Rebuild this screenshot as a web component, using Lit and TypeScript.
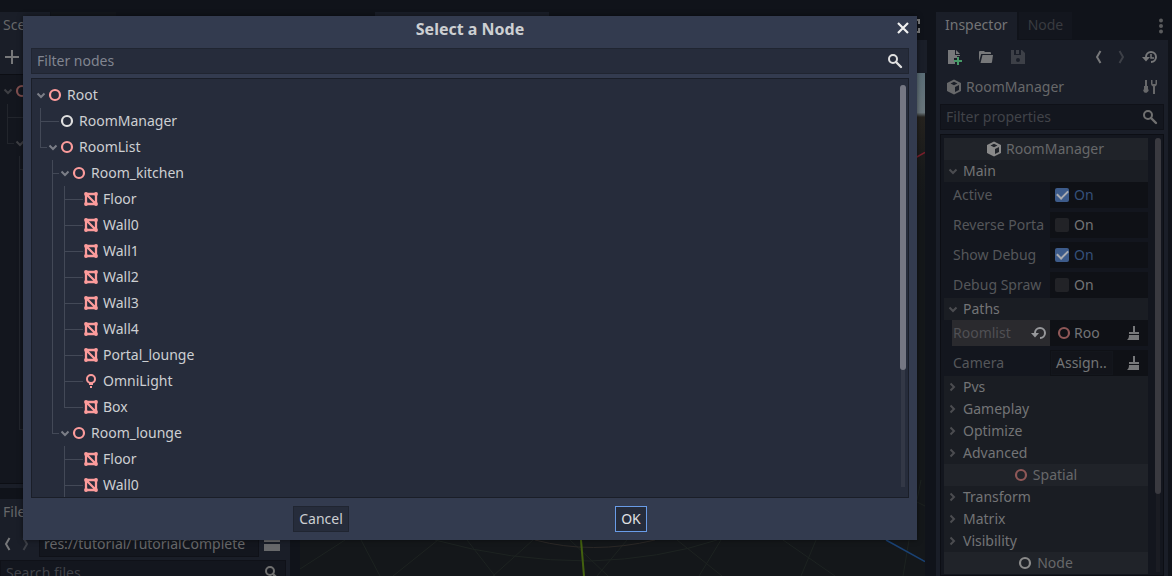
import { LitElement, html, svg, css, nothing } from "lit";
import { customElement, property } from "lit/decorators.js";

/* ---------- icons (16 x 16 grid) ---------- */
const shapes: Record<string, unknown> = {
  spatial: svg`<circle cx="8" cy="8" r="5" fill="none" stroke="currentColor" stroke-width="2.200"/>`,
  mesh: svg`<g fill="none" stroke="currentColor" stroke-width="2.300"><path d="M3 3h10v10H3zM3.500 3.500l9 9"/></g><g fill="currentColor"><circle cx="3" cy="3" r="1.900"/><circle cx="13" cy="3" r="1.900"/><circle cx="3" cy="13" r="1.900"/><circle cx="13" cy="13" r="1.900"/></g>`,
  light: svg`<path fill="currentColor" fill-rule="evenodd" d="M8 1a5 5 0 0 0-5 5 5 5 0 0 0 3 4.570V12h4v-1.430A5 5 0 0 0 13 6a5 5 0 0 0-5-5zm0 2a3 3 0 0 1 3 3 3 3 0 0 1-3 3 3 3 0 0 1-3-3 3 3 0 0 1 3-3zM7 13v2h2v-2z"/>`,
  down: svg`<path d="M4.500 6.500L8 10l3.500-3.500" fill="none" stroke="currentColor" stroke-width="2"/>`,
  right: svg`<path d="M5.500 4.500L9 8l-3.500 3.500" fill="none" stroke="currentColor" stroke-width="2"/>`,
  search: svg`<circle cx="6" cy="6" r="4" fill="none" stroke="currentColor" stroke-width="2"/><path d="M9 9l5 5" stroke="currentColor" stroke-width="2.400" stroke-linecap="round"/>`,
  close: svg`<path d="M3 3l10 10M13 3L3 13" stroke="currentColor" stroke-width="2.200"/>`,
  plus: svg`<path d="M7 1h2v6h6v2H9v6H7V9H1V7h6z" fill="currentColor"/>`,
  back: svg`<path d="M10.500 2L7 8l3.500 6" fill="none" stroke="currentColor" stroke-width="2"/>`,
  forward: svg`<path d="M5.500 2L9 8l-3.500 6" fill="none" stroke="currentColor" stroke-width="2"/>`,
  split: svg`<path d="M0 0h16v6H0zM0 8h16v7H0z" fill="currentColor"/>`,
  newfile: svg`<path fill="currentColor" d="M2 1v14h7v-2H8v-4h3V7h3V6H9V1zm8 0v4h4z"/><path fill="#479a67" d="M11 8h2v3h3v2h-3v3h-2v-3H8v-2h3z"/>`,
  folder: svg`<path fill="currentColor" d="M2 2a1 1 0 0 0-1 1v9.500L3.200 5H13V4a1 1 0 0 0-1-1H7L6 2zM4.500 6L2.500 14H13a1 1 0 0 0 1-.800L15 6z"/>`,
  save: svg`<path fill="currentColor" fill-rule="evenodd" d="M1 1v14h14V4l-3-3h-1v5H4V1zm5 0v4h3V1zm2 8a2 2 0 0 1 0 4 2 2 0 0 1 0-4z"/>`,
  history: svg`<path d="M4 9V8a5 5 0 1 1 5 5" fill="none" stroke="currentColor" stroke-width="2"/><path fill="currentColor" d="M0 8h8L4 12.500z"/><path d="M9 5v4h3" fill="none" stroke="currentColor" stroke-width="1.500"/>`,
  cube: svg`<path fill="currentColor" fill-rule="evenodd" d="M8 .500l7 3.500v8l-7 3.500L1 12V4zM8 2.800L4.500 4.500 8 6.300l3.500-1.800zM9 8v5l4-2V6z"/>`,
  tools: svg`<path fill="currentColor" d="M3 1v6H2v3a2 2 0 0 0 0 3 2.200 2.200 0 0 0 3.500 0 2 2 0 0 0 .500-3V7H5V1zM9 1v4a3 3 0 0 0 2 2.500V15h2V7.500A3 3 0 0 0 15 5V1h-1.500v4h-3V1z"/>`,
  dots: svg`<g fill="currentColor"><circle cx="8" cy="2.500" r="2"/><circle cx="8" cy="8" r="2"/><circle cx="8" cy="13.500" r="2"/></g>`,
  revert: svg`<path d="M4 9V8a5 5 0 1 1 5 5" fill="none" stroke="currentColor" stroke-width="2"/><path fill="currentColor" d="M0 8h8L4 12.500z"/>`,
  brush: svg`<path fill="currentColor" d="M7 1h2v6h4v2H3V7h4zM3 10h10v5H1c1.500-1 2-3 2-5z"/>`,
  expand: svg`<path fill="currentColor" d="M9 1h5v5h-2V3H9zM14 10v5H9v-2h3v-3zM2 1h5v2H4v3H2zM2 10h2v3h3v2H2z"/>`,
};

const icon = (name: string, cls = "") =>
  html`<svg class="icon ${cls}" width="16" height="16" viewBox="0 0 16 16" aria-hidden="true">${shapes[name]}</svg>`;

const shared = css`
  * { box-sizing: border-box; }
  button, input {
    font: inherit; color: inherit; margin: 0; padding: 0;
    border: 0; background: none; border-radius: 0; outline: 0;
  }
  .icon { display: block; flex: none; }
  .coral { color: #fc9c9c; }
  .light { color: #e0e0e0; }
  .field {
    display: flex; align-items: center; height: 26px; padding: 0 5px 1px;
    background: #262c3b; border: 1px solid #202531; color: #e0e0e0;
  }
  .field input { flex: 1; min-width: 0; height: 22px; }
  .field input::placeholder { color: #818590; opacity: 1; }
  .dim .coral { color: #7e4e4e; }
  .dim .light { color: #707070; }
  .dim .field { background: #13161e; border-color: #0f1118; color: #707070; }
  .dim .field input { color: #67686a; }
  .dim .field input::placeholder { color: #414349; }
`;

/* ---------- tree ---------- */
interface TreeNode {
  name: string;
  type: string;
  tone?: string;
  more?: boolean;
  children?: TreeNode[];
}

const mesh = (name: string, more = false): TreeNode => ({ name, type: "mesh", more });

const sceneRoot: TreeNode = {
  name: "Root", type: "spatial", children: [
    { name: "RoomManager", type: "spatial", tone: "light" },
    { name: "RoomList", type: "spatial", children: [
      { name: "Room_kitchen", type: "spatial", children: [
        mesh("Floor"), mesh("Wall0"), mesh("Wall1"), mesh("Wall2"), mesh("Wall3"), mesh("Wall4"),
        mesh("Portal_lounge"), { name: "OmniLight", type: "light" }, mesh("Box"),
      ] },
      { name: "Room_lounge", type: "spatial", children: [mesh("Floor"), mesh("Wall0", true)] },
    ] },
  ],
};

@customElement("node-tree")
class NodeTree extends LitElement {
  @property({ type: Boolean }) dim = false;

  static styles = [shared, css`
    :host { display: block; overflow: hidden; }
    .row { display: flex; align-items: center; height: 26px; line-height: 26px; white-space: nowrap; }
    .guide { flex: none; display: block; overflow: visible; color: #434957; }
    .arrow { width: 10px; height: 26px; margin-right: 1px; flex: none; display: flex; align-items: center; justify-content: center; color: #7b7e87; }
    .label { margin-left: 4px; }
    .dim .guide { color: #22252c; }
    .dim .arrow { color: #3e3f44; }
  `];

  private rows(node: TreeNode, trail: boolean[]): unknown[] {
    const reach = node.children ? 11 : 23;
    const last = trail.length - 1;
    const row = html`
      <div class="row" role="treeitem" aria-level=${trail.length + 1}>
        ${trail.map((more, i) => html`
          <svg class="guide" width="12" height="26" fill="currentColor" aria-hidden="true">
            ${more || i === last ? svg`<rect x="4" y="0" width="1" height=${more ? 26 : 14}/>` : nothing}
            ${i === last ? svg`<rect x="4" y="13" width=${reach - 4} height="1"/>` : nothing}
          </svg>`)}
        <span class="arrow">${node.children ? icon("down") : nothing}</span>
        ${icon(node.type, node.tone ?? "coral")}
        ${this.dim ? nothing : html`<span class="label">${node.name}</span>`}
      </div>`;
    const kids = node.children ?? [];
    return [row, ...kids.flatMap((k, i) => this.rows(k, [...trail, !!k.more || i < kids.length - 1]))];
  }

  render() {
    return html`<div class=${this.dim ? "dim" : ""} role="tree">${this.rows(sceneRoot, [])}</div>`;
  }
}

/* ---------- inspector ---------- */
@customElement("inspector-dock")
class InspectorDock extends LitElement {
  static styles = [shared, css`
    :host { display: flex; flex-direction: column; min-height: 0; color: #67686a; }
    .dock { flex: 1; min-height: 0; display: flex; flex-direction: column; }
    .tabs { display: flex; height: 28px; gap: 2px; }
    .tab { height: 27px; padding: 0 9px 1px; background: #13161e; color: #393b40; }
    .tab.on { height: 28px; padding-bottom: 2px; background: #1a1e28; color: #737476; }
    .more { width: 16px; margin-left: auto; margin-right: -1px; align-self: center; color: #5a5b5d; }
    .panel { flex: 1; min-height: 0; display: flex; flex-direction: column; background: #1a1e28; padding: 0 4px; }
    .bar { display: flex; align-items: center; height: 34px; padding: 0 6px; gap: 16px; color: #77787a; }
    .bar .off { color: #3d4047; }
    .push { margin-left: auto; }
    .nav { display: flex; gap: 8px; margin-left: auto; margin-right: -4px; }
    .object { display: flex; align-items: center; height: 26px; padding: 0 6px; gap: 4px; }
    .panel .field { margin: 4px 0; }
    .list { flex: 1; min-height: 0; overflow: hidden; display: flex; justify-content: space-between; background: #13161e; border: 1px solid #0c0e14; padding: 3px 2px 0 3px; }
    .props { flex: 1; min-width: 0; margin-right: 7px; }
    .head { display: flex; align-items: center; justify-content: center; gap: 4px; height: 22px; padding-right: 2px; background: #202329; }
    .head .icon { color: #8a8a8a; }
    .head .coral { color: #8e5757; }
    .group { display: flex; align-items: center; gap: 2px; width: 100%; height: 22px; padding-left: 1px; background: #1a1d23; color: #737476; }
    .group .icon { color: #4b4c50; }
    .prop { display: grid; grid-template-columns: 1fr 1fr; height: 26px; padding-left: 8px; }
    .prop + .prop { margin-top: 4px; }
    .name { display: flex; align-items: center; justify-content: space-between; color: #55565a; padding: 0 3px 0 1px; white-space: nowrap; overflow: hidden; }
    .name.changed { background: #2a2a2e; color: #505054; }
    .name .icon { color: #97989b; }
    .value { display: flex; align-items: center; background: #0f1116; padding: 0 6px; gap: 4px; color: #737476; }
    .check { display: flex; align-items: center; gap: 5px; margin-left: -1px; }
    .check input { appearance: none; width: 14px; height: 14px; border-radius: 2px; background: #222327; display: grid; place-items: center; }
    .check input:checked { background: #3d5b8a; }
    .check input:checked::after { content: ""; width: 9px; height: 5px; margin-bottom: 3px; border: solid #a9abb0; border-width: 0 0 2px 2px; transform: rotate(-45deg); }
    .check:has(input:checked) { color: #35507a; }
    .pick { display: flex; align-items: center; gap: 2px; height: 24px; }
    .pick .coral { color: #8e5757; }
    .assign { height: 24px; margin-left: -5px; padding: 0 5px 0 4px; border: 1px solid #13161c; background: #12141a; }
    .value .clear { margin-left: auto; color: #77787a; }
    .scroll { width: 6px; flex: none; margin-bottom: 3px; background: linear-gradient(90deg, transparent 1px, #1a1c23 1px 5px, transparent 5px); }
    .thumb { width: 6px; height: 356px; border-radius: 3px; background: #3a3a40; }
  `];

  private check(name: string, on: boolean) {
    return html`<div class="prop"><span class="name" id=${name}>${name}</span>
      <div class="value"><label class="check"><input type="checkbox" aria-describedby=${name} ?checked=${on}>On</label></div></div>`;
  }
  private group(name: string, open = false) {
    return html`<button class="group" aria-expanded=${open}>${icon(open ? "down" : "right")}<span>${name}</span></button>`;
  }

  render() {
    return html`<div class="dock dim">
      <div class="tabs" role="tablist">
        <button class="tab on" role="tab">Inspector</button>
        <button class="tab" role="tab">Node</button>
        <button class="more" aria-label="Dock options">${icon("dots")}</button>
      </div>
      <div class="panel">
        <div class="bar">
          <button aria-label="New resource">${icon("newfile")}</button>
          <button aria-label="Load resource">${icon("folder")}</button>
          <button class="off" aria-label="Save resource">${icon("save")}</button>
          <div class="nav">
            <button aria-label="Previous object">${icon("back")}</button>
            <button class="off" aria-label="Next object">${icon("forward")}</button>
          </div>
          <button aria-label="History">${icon("history")}</button>
        </div>
        <div class="object">${icon("cube")}<span>RoomManager</span>
          <button class="push" aria-label="Object properties">${icon("tools")}</button></div>
        <label class="field"><input aria-label="Filter properties" placeholder="Filter properties">${icon("search")}</label>
        <div class="list">
          <div class="props">
            <div class="head">${icon("cube")}<span>RoomManager</span></div>
            ${this.group("Main", true)}
            ${this.check("Active", true)}
            ${this.check("Reverse Porta", false)}
            ${this.check("Show Debug", true)}
            ${this.check("Debug Spraw", false)}
            ${this.group("Paths", true)}
            <div class="prop"><span class="name changed">Roomlist<button aria-label="Revert">${icon("revert")}</button></span>
              <div class="value"><button class="pick">${icon("spatial", "coral")}<span>Roo</span></button>
                <button class="clear" aria-label="Clear room list">${icon("brush")}</button></div></div>
            <div class="prop"><span class="name">Camera</span>
              <div class="value"><button class="assign">Assign..</button>
                <button class="clear" aria-label="Clear camera">${icon("brush")}</button></div></div>
            ${["Pvs", "Gameplay", "Optimize", "Advanced"].map((g) => this.group(g))}
            <div class="head">${icon("spatial", "coral")}<span>Spatial</span></div>
            ${["Transform", "Matrix", "Visibility"].map((g) => this.group(g))}
            <div class="head">${icon("spatial")}<span>Node</span></div>
          </div>
          <div class="scroll"><div class="thumb"></div></div>
        </div>
      </div>
    </div>`;
  }
}

/* ---------- left column: scene and file docks ---------- */
@customElement("left-docks")
class LeftDocks extends LitElement {
  static styles = [shared, css`
    :host { display: flex; flex-direction: column; min-height: 0; color: #67686a; }
    .column { flex: 1; min-height: 0; display: grid; grid-template-rows: 1fr 77px; gap: 11px; }
    .dock { display: flex; flex-direction: column; min-height: 0; overflow: hidden; }
    .tabs { display: flex; height: 28px; flex: none; gap: 1px; }
    .tab { padding: 0 8px 2px 3px; height: 28px; background: #1a1e28; }
    .ghost { width: 65px; height: 27px; background: #13161c; }
    .panel { flex: 1; min-height: 0; display: flex; flex-direction: column; background: #1a1e28; padding: 0 4px 4px 0; }
    .bar { display: flex; align-items: center; height: 34px; flex: none; padding-left: 4px; color: #77787a; }
    .tree { flex: 1; min-height: 0; background: #13161e; border: solid #0c0e14; border-width: 1px 1px 1px 0; padding-top: 3px; padding-left: 3px; }
    .path { display: flex; align-items: center; height: 34px; flex: none; gap: 5px; padding-right: 6px; }
    .path .field { flex: 1; padding-left: 4px; }
    .nav { display: flex; gap: 3px; margin-left: -1px; color: #77787a; }
    .off { color: #3d4047; }
    .search { flex: none; margin-top: -1px; }
  `];

  render() {
    return html`<div class="column dim">
      <section class="dock">
        <div class="tabs"><button class="tab">Scene</button><span class="ghost"></span></div>
        <div class="panel">
          <div class="bar"><button aria-label="Add node">${icon("plus")}</button></div>
          <node-tree class="tree" dim></node-tree>
        </div>
      </section>
      <section class="dock">
        <div class="tabs"><button class="tab">FileSystem</button></div>
        <div class="panel">
          <div class="path">
            <div class="nav"><button aria-label="Back">${icon("back")}</button><button class="off" aria-label="Forward">${icon("forward")}</button></div>
            <div class="field"><input aria-label="Path" value="res://tutorial/TutorialComplete"></div>
            <button aria-label="Split view">${icon("split")}</button>
          </div>
          <label class="field search"><input aria-label="Search files" placeholder="Search files">${icon("search")}</label>
        </div>
      </section>
    </div>`;
  }
}

/* ---------- 3D viewport ---------- */
@customElement("scene-viewport")
class SceneViewport extends LitElement {
  static styles = [shared, css`
    :host { display: flex; flex-direction: column; min-height: 0; min-width: 0; }
    .strip { display: flex; align-items: center; justify-content: flex-end; height: 28px; padding-left: 76px; padding-right: 5px; color: #7f7f7f; }
    .tab { width: 174px; height: 28px; margin-right: auto; background: #1a1e28; }
    .bar { height: 33px; background: #1a1e28; }
    .view { flex: 1; min-height: 0; margin: 0 2px 0 1px; overflow: hidden; background: #14171a; }
    .canvas { display: block; width: 100%; height: 100%; }
  `];

  render() {
    return html`
      <div class="strip"><div class="tab"></div>${icon("expand")}</div>
      <div class="bar"></div>
      <div class="view">
        <svg class="canvas" viewBox="300 73 625 503" preserveAspectRatio="xMaxYMax slice" fill="none" aria-hidden="true">
          <defs>
            <linearGradient id="sky" x1="0" y1="0" x2="0" y2="1">
              <stop offset="0" stop-color="#5a6d76"/><stop offset="0.900" stop-color="#6a767c"/><stop offset="1" stop-color="#25231f"/>
            </linearGradient>
            <linearGradient id="ground" x1="0" y1="0" x2="0" y2="1">
              <stop offset="0" stop-color="#25221e"/><stop offset="0.600" stop-color="#181a1b"/><stop offset="1" stop-color="#14171a"/>
            </linearGradient>
          </defs>
          <rect x="300" y="73" width="625" height="44" fill="url(#sky)"/>
          <rect x="300" y="117" width="625" height="90" fill="url(#ground)"/>
          <g stroke="#1d2321">
            <path d="M300 569L345 540M361 540L380 576M393 576L438 540M467 540L495 576M533 540L493 576M435 540Q510 561 590 561Q660 559 717 540"/>
            <path d="M570 540L608 576M627 540L597 576M677 540L722 576M721 540L699 576M783 540L835 576M816 540L801 576M909 540L903 576M917 502L925 506M921 480L917 500"/>
          </g>
          <path d="M535 540Q592 555 655 540" stroke="#2b2826"/>
          <path d="M581 540L584 576" stroke="#42600f" stroke-width="2"/>
          <path d="M886 540L925 561.500" stroke="#1a4274" stroke-width="1.500"/>
          <path d="M915 158L925 152.500" stroke="#7b1f2c" stroke-width="1.500"/>
        </svg>
      </div>`;
  }
}

/* ---------- node picker ---------- */
@customElement("node-picker")
class NodePicker extends LitElement {
  static styles = [shared, css`
    :host { display: flex; flex-direction: column; min-height: 0; }
    .dialog { flex: 1; min-height: 0; display: flex; flex-direction: column; padding: 0 8px 8px; background: #333b4f; box-shadow: 0 0 5px #00000080; }
    .title { display: grid; grid-template-columns: 14px 1fr 14px; align-items: center; height: 32px; padding-bottom: 6px; }
    .title h1 { grid-column: 2; margin: 0; text-align: center; font-size: 16px; line-height: 22px; font-weight: 700; color: #cdcfd2; }
    .close { color: #f0f0f0; padding-bottom: 2px; }
    .body { flex: 1; min-height: 0; overflow: hidden; margin: 4px 0 8px; display: flex; justify-content: space-between; background: #262c3b; border: 1px solid #1a1e28; padding: 3px 2px 0 4px; }
    .tree { flex: 1; min-width: 0; }
    .scroll { flex: none; width: 6px; margin: 3px 0 10px; background: linear-gradient(90deg, transparent 1px, #333846 1px 5px, transparent 5px); }
    .thumb { width: 6px; height: 71%; border-radius: 3px; background: #757783; }
    .actions { display: flex; gap: 4px; }
    .actions::before, .actions::after, .space { content: ""; flex: 1; }
    .action { height: 26px; padding: 0 5px; background: #262c3b; border: 1px solid #202531; color: #cdcfd2; }
    .action.focus { border-color: #699ce8; color: #e0e1e4; }
  `];

  render() {
    return html`<div class="dialog" role="dialog" aria-labelledby="title">
      <div class="title"><h1 id="title">Select a Node</h1>
        <button class="close" aria-label="Close">${icon("close")}</button></div>
      <label class="field"><input aria-label="Filter nodes" placeholder="Filter nodes">${icon("search")}</label>
      <div class="body"><node-tree class="tree"></node-tree><div class="scroll"><div class="thumb"></div></div></div>
      <div class="actions">
        <button class="action">Cancel</button><span class="space"></span><button class="action focus">OK</button>
      </div>
    </div>`;
  }
}

@customElement("app-root")
class AppRoot extends LitElement {
  static styles = [shared, css`
    :host {
      display: block; position: relative; height: 100vh; overflow: hidden;
      background: #10131a; color: #cdcfd2;
      font: 14px/20px "Noto Sans", sans-serif;
    }
    .editor { display: grid; height: 100%; padding: 12px 4px 0 0; grid-template-columns: 290px minmax(0, 1fr) 232px; grid-template-rows: minmax(0, 1fr); }
    .center { margin: 0 9px 0 9px; }
    .overlay { position: absolute; inset: 0; display: flex; padding: 16px 255px 36px 23px; }
    .picker { flex: 1; min-width: 0; }
  `];

  render() {
    return html`
      <main class="editor">
        <left-docks></left-docks>
        <scene-viewport class="center"></scene-viewport>
        <inspector-dock></inspector-dock>
      </main>
      <div class="overlay"><node-picker class="picker"></node-picker></div>`;
  }
}
